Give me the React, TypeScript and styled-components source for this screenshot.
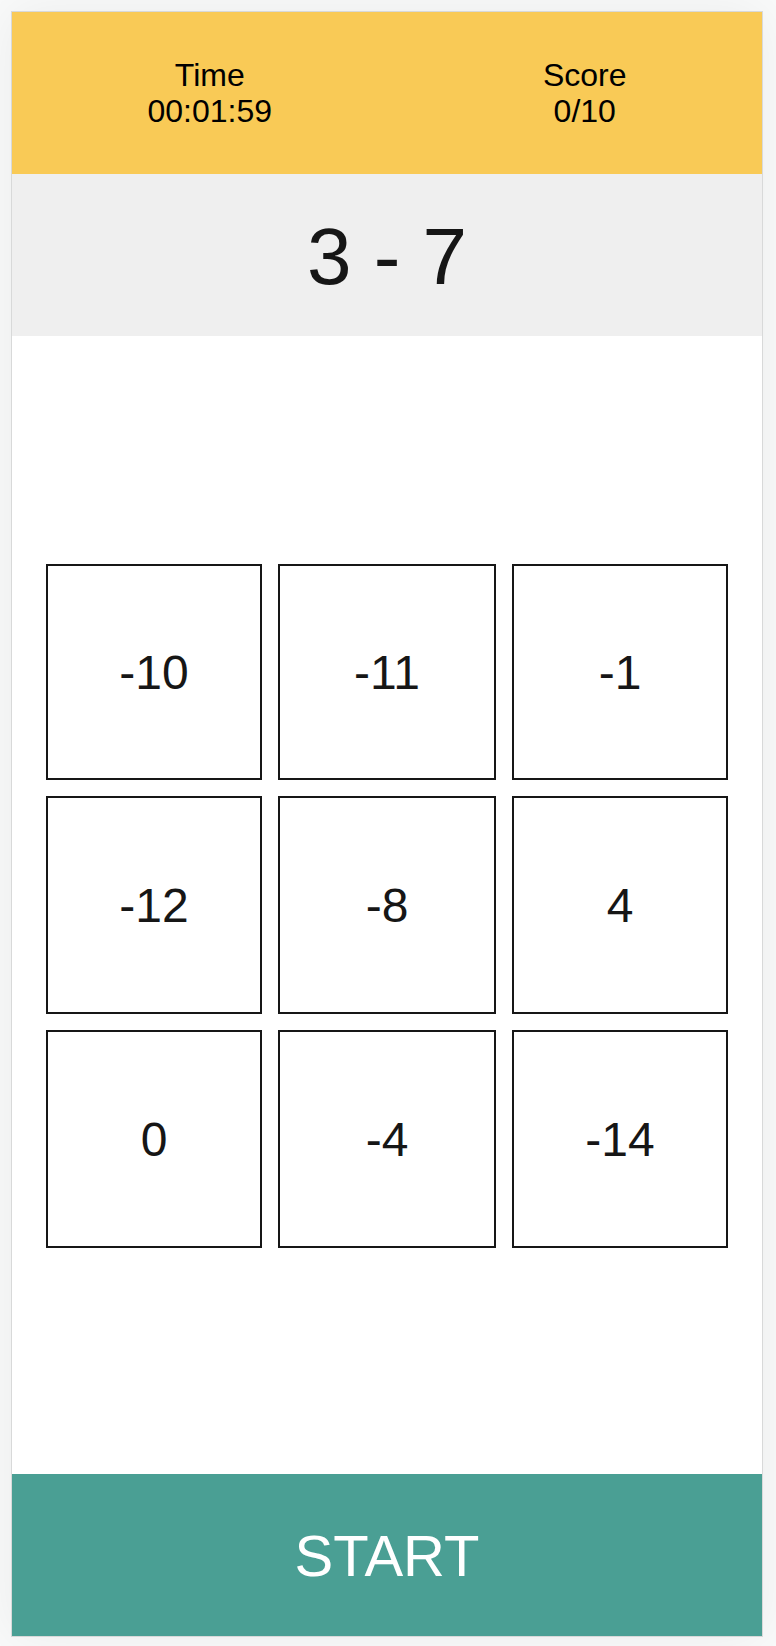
import React from 'react';
import styled, { createGlobalStyle } from 'styled-components';

const GlobalStyle = createGlobalStyle`
  *, *::before, *::after { box-sizing: border-box; }
  body {
    margin: 0;
    background: #f9fafa;
    color: #161616;
    font-family: 'Helvetica Neue Light', 'Liberation Sans', Arial, sans-serif;
    font-weight: 300;
  }
  button { font: inherit; color: inherit; cursor: pointer; border-radius: 0; }
`;

const Page = styled.div`
  display: flex;
  min-height: 100vh;
  padding: 11px 13px 9px 11px;
`;

const Game = styled.main`
  flex: 1;
  display: flex;
  flex-direction: column;
  background: #fff;
  border: 1px solid #d8d9d9;
  box-shadow: 0 0 48px rgba(0, 0, 0, 0.06);
`;

const Band = styled.div`
  display: flex;
  align-items: center;
  justify-content: center;
  height: 162px;
  flex-shrink: 0;
`;

const StatusBar = styled(Band)`
  justify-content: space-around;
  background: #f9ca56;
  color: #000;
`;

const Stat = styled.div`
  text-align: center;
  font-size: 32px;
  line-height: 36px;
`;

const Question = styled(Band)`
  padding-top: 4px;
  background: #efefef;
  font-size: 80px;
  line-height: 96px;
`;

const Board = styled.section`
  flex: 1;
  display: flex;
  align-items: center;
  padding: 36px 34px 34px;
`;

const Answers = styled.div`
  display: grid;
  width: 100%;
  aspect-ratio: 682 / 684;
  grid-template-columns: 108fr 109fr 108fr;
  grid-template-rows: 108fr 109fr 109fr;
  gap: 16px;
`;

const Answer = styled.button`
  padding: 0;
  border: 2px solid #161616;
  background: #fff;
  && { font-size: 48px; }
`;

const StartButton = styled(Band).attrs({ as: 'button', type: 'button' })`
  width: 100%;
  padding: 0;
  border: 0;
  background: #4a9f94;
  && { color: #fff; font-size: 58px; }
`;

const answers = [-10, -11, -1, -12, -8, 4, 0, -4, -14];

export default function App() {
  return (
    <>
      <GlobalStyle />
      <Page>
        <Game>
          <StatusBar>
            <Stat>
              <div>Time</div>
              <div>00:01:59</div>
            </Stat>
            <Stat>
              <div>Score</div>
              <div>0/10</div>
            </Stat>
          </StatusBar>
          <Question>3 - 7</Question>
          <Board>
            <Answers>
              {answers.map((value) => (
                <Answer key={value} type="button">{value}</Answer>
              ))}
            </Answers>
          </Board>
          <StartButton>START</StartButton>
        </Game>
      </Page>
    </>
  );
}
